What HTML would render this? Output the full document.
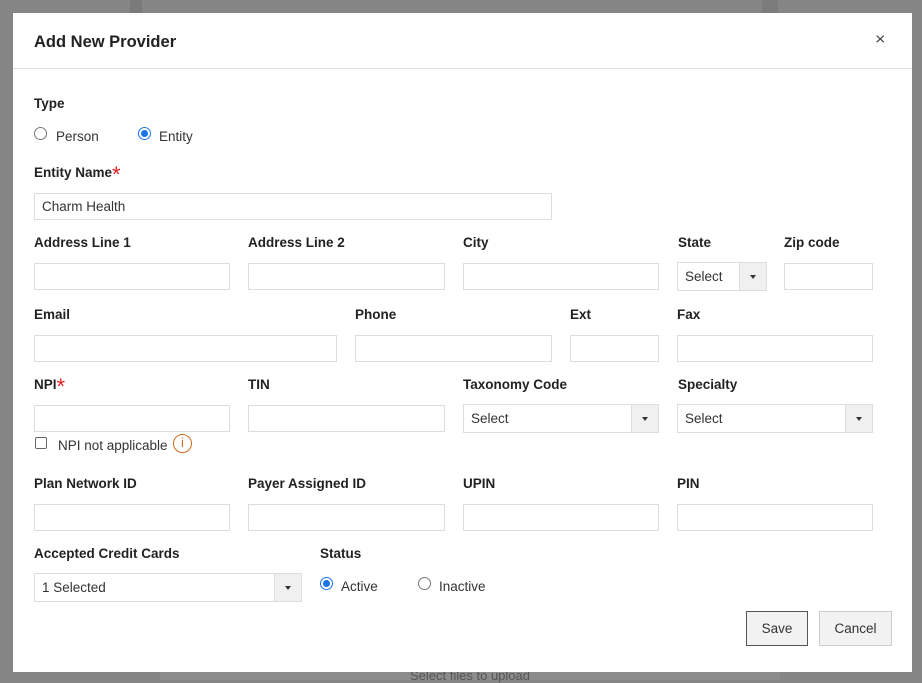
<!DOCTYPE html>
<html><head><style>
*{box-sizing:border-box;margin:0;padding:0}
body{width:922px;height:680px;background:#858585;position:relative;overflow:hidden;font-family:"Liberation Sans",Arial,sans-serif;color:#333}
.bg1{position:absolute;left:130px;top:0;width:12px;height:14px;background:#7a7a7a}
.bg2{position:absolute;left:762px;top:0;width:16px;height:680px;background:#7c7c7c}
.bgb{position:absolute;left:160px;top:672px;width:620px;height:8px;background:#8c8c8c;color:#555;font-size:13px;text-align:center;line-height:8px}
.m{position:absolute;left:13px;top:13px;width:899px;height:659px;background:#fff}
.hd{position:absolute;left:0;top:0;width:100%;height:56px;border-bottom:1px solid #ddd}
.t{position:absolute;left:21px;top:20px;font-size:16.5px;font-weight:bold;color:#222}
.x{position:absolute;left:862px;top:16px;font-size:18px;color:#444;font-weight:normal;transform:scaleY(0.9)}
.l{position:absolute;font-size:13.5px;font-weight:bold;color:#222}
.i{position:absolute;height:27px;border:1px solid #ddd;background:#fff}
.s{position:absolute;height:29px;border:1px solid #ddd;background:#fff;font-size:13.5px;padding:6px 7px;color:#333}
.s b{position:absolute;right:0;top:0;width:27px;height:27px;background:#f0f0f0;border-left:1px solid #ddd}
.s b:after{content:"";position:absolute;left:10px;top:12px;border:3px solid transparent;border-top:4px solid #333;border-bottom:0}
.r{position:absolute;width:13px;height:13px;border:1px solid #777;border-radius:50%;background:#fff}
.r.on{border:1px solid #1a73e8}
.r.on:after{content:"";position:absolute;left:2px;top:2px;width:7px;height:7px;border-radius:50%;background:#1a73e8}
.tx{position:absolute;font-size:13.5px;color:#333}
.red{color:#e02020;font-weight:normal;font-size:22px;position:relative;top:5px;line-height:10px}
.btn{position:absolute;height:35px;border:1px solid #ccc;background:#f2f2f2;font-size:13.5px;text-align:center;line-height:33px;color:#333}
</style></head><body>
<div class="bg1"></div><div class="bg2"></div><div class="bgb">Select files to upload</div>
<div class="m">
<div class="hd"><div class="t">Add New Provider</div><div class="x">×</div></div>
</div>
<div class="l" style="left:34px;top:96px">Type</div>
<div class="r" style="left:34px;top:127px"></div><div class="tx" style="left:56px;top:129px">Person</div>
<div class="r on" style="left:138px;top:127px"></div><div class="tx" style="left:159px;top:129px">Entity</div>
<div class="l" style="left:34px;top:165px">Entity Name<span class="red">*</span></div>
<div class="i" style="left:34px;top:193px;width:518px;font-size:13.5px;padding:5px 7px">Charm Health</div>

<div class="l" style="left:34px;top:235px">Address Line 1</div>
<div class="l" style="left:248px;top:235px">Address Line 2</div>
<div class="l" style="left:463px;top:235px">City</div>
<div class="l" style="left:678px;top:235px">State</div>
<div class="l" style="left:784px;top:235px">Zip code</div>
<div class="i" style="left:34px;top:263px;width:196px"></div>
<div class="i" style="left:248px;top:263px;width:197px"></div>
<div class="i" style="left:463px;top:263px;width:196px"></div>
<div class="s" style="left:677px;top:262px;width:90px">Select<b></b></div>
<div class="i" style="left:784px;top:263px;width:89px"></div>

<div class="l" style="left:34px;top:307px">Email</div>
<div class="l" style="left:355px;top:307px">Phone</div>
<div class="l" style="left:570px;top:307px">Ext</div>
<div class="l" style="left:677px;top:307px">Fax</div>
<div class="i" style="left:34px;top:335px;width:303px"></div>
<div class="i" style="left:355px;top:335px;width:197px"></div>
<div class="i" style="left:570px;top:335px;width:89px"></div>
<div class="i" style="left:677px;top:335px;width:196px"></div>

<div class="l" style="left:34px;top:377px">NPI<span class="red">*</span></div>
<div class="l" style="left:248px;top:377px">TIN</div>
<div class="l" style="left:463px;top:377px">Taxonomy Code</div>
<div class="l" style="left:678px;top:377px">Specialty</div>
<div class="i" style="left:34px;top:405px;width:196px"></div>
<div class="i" style="left:248px;top:405px;width:197px"></div>
<div class="s" style="left:463px;top:404px;width:196px">Select<b></b></div>
<div class="s" style="left:677px;top:404px;width:196px">Select<b></b></div>
<div style="position:absolute;left:35px;top:437px;width:12px;height:12px;border:1px solid #666;border-radius:2px"></div>
<div class="tx" style="left:58px;top:438px">NPI not applicable</div>
<div style="position:absolute;left:173px;top:434px;width:19px;height:19px;border:1.5px solid #d2691e;border-radius:50%;color:#d2691e;font-size:13px;text-align:center;line-height:16px">i</div>

<div class="l" style="left:34px;top:476px">Plan Network ID</div>
<div class="l" style="left:248px;top:476px">Payer Assigned ID</div>
<div class="l" style="left:463px;top:476px">UPIN</div>
<div class="l" style="left:677px;top:476px">PIN</div>
<div class="i" style="left:34px;top:504px;width:196px"></div>
<div class="i" style="left:248px;top:504px;width:197px"></div>
<div class="i" style="left:463px;top:504px;width:196px"></div>
<div class="i" style="left:677px;top:504px;width:196px"></div>

<div class="l" style="left:34px;top:546px">Accepted Credit Cards</div>
<div class="l" style="left:320px;top:546px">Status</div>
<div class="s" style="left:34px;top:573px;width:268px">1 Selected<b></b></div>
<div class="r on" style="left:320px;top:577px"></div><div class="tx" style="left:341px;top:579px">Active</div>
<div class="r" style="left:418px;top:577px"></div><div class="tx" style="left:439px;top:579px">Inactive</div>

<div class="btn" style="left:746px;top:611px;width:62px;border-color:#555">Save</div>
<div class="btn" style="left:819px;top:611px;width:73px">Cancel</div>
</body></html>
